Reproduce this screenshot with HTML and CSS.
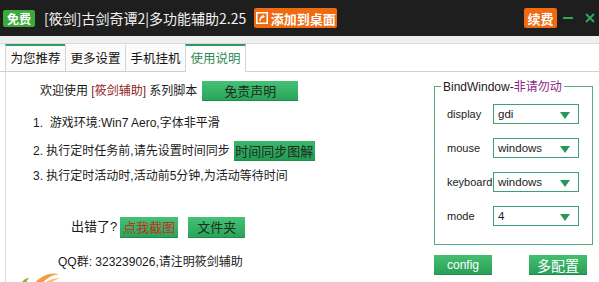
FILE: index.html
```html
<!DOCTYPE html>
<html lang="zh-CN">
<head>
    <meta charset="UTF-8">
    <meta name="viewport" content="width=device-width, initial-scale=1.0">
    <title>[筱剑]古剑奇谭2|多功能辅助2.25</title>
    <link rel="stylesheet" href="styles.css">
</head>
<body>
    <div class="window">
        <header class="titlebar">
            <span class="badge">免费</span>
            <span class="title">[筱剑]古剑奇谭2|多功能辅助2.25</span>
            <span class="btn-orange add">
                <svg width="12" height="12" viewBox="0 0 12 12">
                    <rect x="0.75" y="0.75" width="10.5" height="10.5" fill="none" stroke="#fff" stroke-width="1.5"/>
                    <path d="M4 9 C4 6 5.5 4.5 8 4.5" fill="none" stroke="#fff" stroke-width="1.5"/>
                    <path d="M6.5 2.5 L9 4.5 L6.5 6.5 Z" fill="#fff"/>
                </svg>
                添加到桌面
            </span>
            <span class="spacer"></span>
            <span class="btn-orange renew">续费</span>
            <span class="win-min"></span>
            <span class="win-close">
                <svg width="10" height="10" viewBox="0 0 10 10">
                    <path d="M1 1 L9 9 M9 1 L1 9" stroke="#2fa84f" stroke-width="2"/>
                </svg>
            </span>
        </header>
        <div class="band"></div>
        <nav class="tabs">
            <div class="tab hot">为您推荐</div>
            <div class="tab">更多设置</div>
            <div class="tab">手机挂机</div>
            <div class="tab active">使用说明</div>
        </nav>

        <main class="panel">
            <section class="guide">
                <div class="row welcome">欢迎使用 <span class="brand">[筱剑辅助]</span> 系列脚本<span class="btn btn-disclaimer">免责声明</span></div>
                <div class="row step step-1">1.&nbsp; 游戏环境:Win7 Aero,字体非平滑</div>
                <div class="row step step-2">2. 执行定时任务前,请先设置时间同步<span class="btn btn-sync">时间同步图解</span></div>
                <div class="row step step-3">3. 执行定时活动时,活动前5分钟,为活动等待时间</div>
                <div class="row error">出错了?<span class="btn btn-shot">点我截图</span><span class="btn btn-folder">文件夹</span></div>
                <div class="row qq">QQ群: 323239026,请注明筱剑辅助</div>
                <svg class="logo" width="50" height="14" viewBox="0 0 50 14">
                    <path d="M3 14 C5 10 8 8 11 8 C9 10 8 12 8 14 Z" fill="#7cb342"/>
                    <path d="M16 14 C22 6 32 2 41 4 C34 5 27 9 24 14 Z" fill="#f0a040"/>
                    <path d="M25 14 C30 10 36 8 42 8 C37 10 34 12 32 14 Z" fill="#f6c27a"/>
                </svg>
            </section>

            <aside class="bind">
                <fieldset class="group">
                    <legend>BindWindow-<span class="warn">非请勿动</span></legend>
                    <div class="field">
                        <span class="label">display</span>
                        <div class="select"><span>gdi</span><i class="arrow"></i></div>
                    </div>
                    <div class="field">
                        <span class="label">mouse</span>
                        <div class="select"><span>windows</span><i class="arrow"></i></div>
                    </div>
                    <div class="field">
                        <span class="label">keyboard</span>
                        <div class="select"><span>windows</span><i class="arrow"></i></div>
                    </div>
                    <div class="field">
                        <span class="label">mode</span>
                        <div class="select"><span>4</span><i class="arrow"></i></div>
                    </div>
                </fieldset>
                <div class="actions">
                    <span class="btn btn-white btn-config">config</span>
                    <span class="btn btn-white btn-multi">多配置</span>
                </div>
            </aside>
        </main>
    </div>
</body>
</html>
```

FILE: styles.css
```css
body {
    margin: 0;
    background: #ffffff;
    font-family: "Liberation Sans", "Noto Sans CJK SC", sans-serif;
    font-size: 12px;
    color: #1a1a1a;
}

.window {
    width: 599px;
    height: 282px;
    overflow: hidden;
}

/* title bar */
.titlebar {
    display: flex;
    align-items: center;
    height: 36px;
    background: #1e1e1e;
}

.badge {
    margin-left: 3px;
    height: 17px;
    line-height: 17px;
    padding: 0 4px;
    background: #3aaa3c;
    color: #fff;
    font-family: "Noto Sans CJK SC", sans-serif;
    font-size: 12px;
    font-weight: bold;
    border-radius: 2px;
}

.title {
    margin-left: 9px;
    color: #f2f2f2;
    font-family: "Noto Sans CJK SC", sans-serif;
    font-size: 14px;
}

.btn-orange {
    display: flex;
    align-items: center;
    justify-content: center;
    height: 20px;
    background: #f06a10;
    color: #fff;
    font-family: "Noto Sans CJK SC", sans-serif;
    font-size: 13px;
    font-weight: bold;
    border-radius: 2px;
}

.add {
    margin-left: 8px;
    width: 83px;
    gap: 3px;
}

.spacer {
    flex: 1;
}

.renew {
    width: 33px;
}

.win-min {
    margin-left: 6px;
    width: 10px;
    height: 2px;
    background: #2fa84f;
}

.win-close {
    display: flex;
    margin-left: 12px;
    margin-right: 4px;
}

.band {
    height: 7px;
    background: #efefef;
}

/* tabs */
.tabs {
    display: flex;
    height: 27px;
    padding-left: 5px;
    border-top: 1px solid #dadada;
    border-bottom: 1px solid #cfcfcf;
    background: #ffffff;
}

.tab {
    width: 59px;
    height: 25px;
    line-height: 24px;
    text-align: center;
    border-left: 1px solid #d4d4d4;
    border-top: 2px solid transparent;
    font-family: "Noto Sans CJK SC", sans-serif;
    font-size: 12.5px;
    color: #111;
    background: #fbfbfb;
}

.tab.hot {
    border-top-color: #2e9a64;
}

.tab.active {
    border-top-color: #2e9a64;
    border-right: 1px solid #d4d4d4;
    height: 26px;
    margin-bottom: -1px;
    background: #ffffff;
    color: #2f8a58;
}

/* body */
.panel {
    display: flex;
    height: 210px;
    margin-left: 5px;
    border-left: 1px solid #dedede;
}

.guide {
    width: 428px;
}

.row {
    height: 20px;
    line-height: 20px;
    white-space: nowrap;
}

.welcome {
    margin-top: 9px;
    padding-left: 34px;
}

.brand {
    color: #8c1c1c;
}

.step {
    padding-left: 27px;
}

.step-1 {
    margin-top: 12px;
}

.step-2 {
    margin-top: 8px;
}

.step-3 {
    margin-top: 5px;
}

.error {
    margin-top: 31px;
    padding-left: 65px;
    height: 21px;
    font-size: 13px;
}

.qq {
    margin-top: 14px;
    padding-left: 52px;
}

.logo {
    display: block;
    margin: -2px 0 0 12px;
}

/* buttons */
.btn {
    display: inline-block;
    vertical-align: top;
    height: 20px;
    line-height: 20px;
    text-align: center;
    background: linear-gradient(#46c277, #28a559);
    border-bottom: 1px solid #1f8d4a;
    box-sizing: border-box;
    font-family: "Noto Sans CJK SC", sans-serif;
    font-size: 13px;
    color: #1d2b20;
}

.btn-disclaimer {
    margin-left: 5px;
    width: 96px;
}

.btn-sync {
    margin-left: 4px;
    width: 81px;
    background: linear-gradient(#3bb86c, #239a51);
}

.btn-shot {
    margin-left: 3px;
    width: 58px;
    height: 21px;
    color: #c0321e;
}

.btn-folder {
    margin-left: 10px;
    width: 57px;
    height: 21px;
}

/* bind window group */
.bind {
    width: 159px;
    padding-top: 7px;
}

.group {
    margin: 0;
    padding: 0 0 18px 12px;
    border: 1px solid #5aab85;
}

.group legend {
    margin-left: -6px;
    padding: 0 2px;
    line-height: 14px;
    font-size: 12px;
    color: #1a1a1a;
}

.warn {
    font-family: "Noto Sans CJK SC", sans-serif;
    color: #8a1f88;
}

.field {
    display: flex;
    align-items: center;
    height: 20px;
    margin-top: 14px;
}

.field:first-of-type {
    margin-top: 10px;
}

.label {
    width: 46px;
    font-size: 11px;
}

.select {
    position: relative;
    display: flex;
    align-items: center;
    width: 86px;
    height: 20px;
    box-sizing: border-box;
    padding-left: 4px;
    border: 1px solid #3f9f70;
    font-size: 11.5px;
}

.arrow {
    position: absolute;
    right: 8px;
    top: 7px;
    width: 0;
    height: 0;
    border-left: 5px solid transparent;
    border-right: 5px solid transparent;
    border-top: 7px solid #26995a;
}

.actions {
    display: flex;
    justify-content: space-between;
    width: 153px;
    margin-top: 10px;
}

.btn-white {
    width: 58px;
    color: #ffffff;
    background: linear-gradient(#44bf72, #2a9f57);
}

.btn-config {
    font-family: "Liberation Sans", sans-serif;
    font-size: 12px;
}

.btn-multi {
    font-size: 14px;
}
```
